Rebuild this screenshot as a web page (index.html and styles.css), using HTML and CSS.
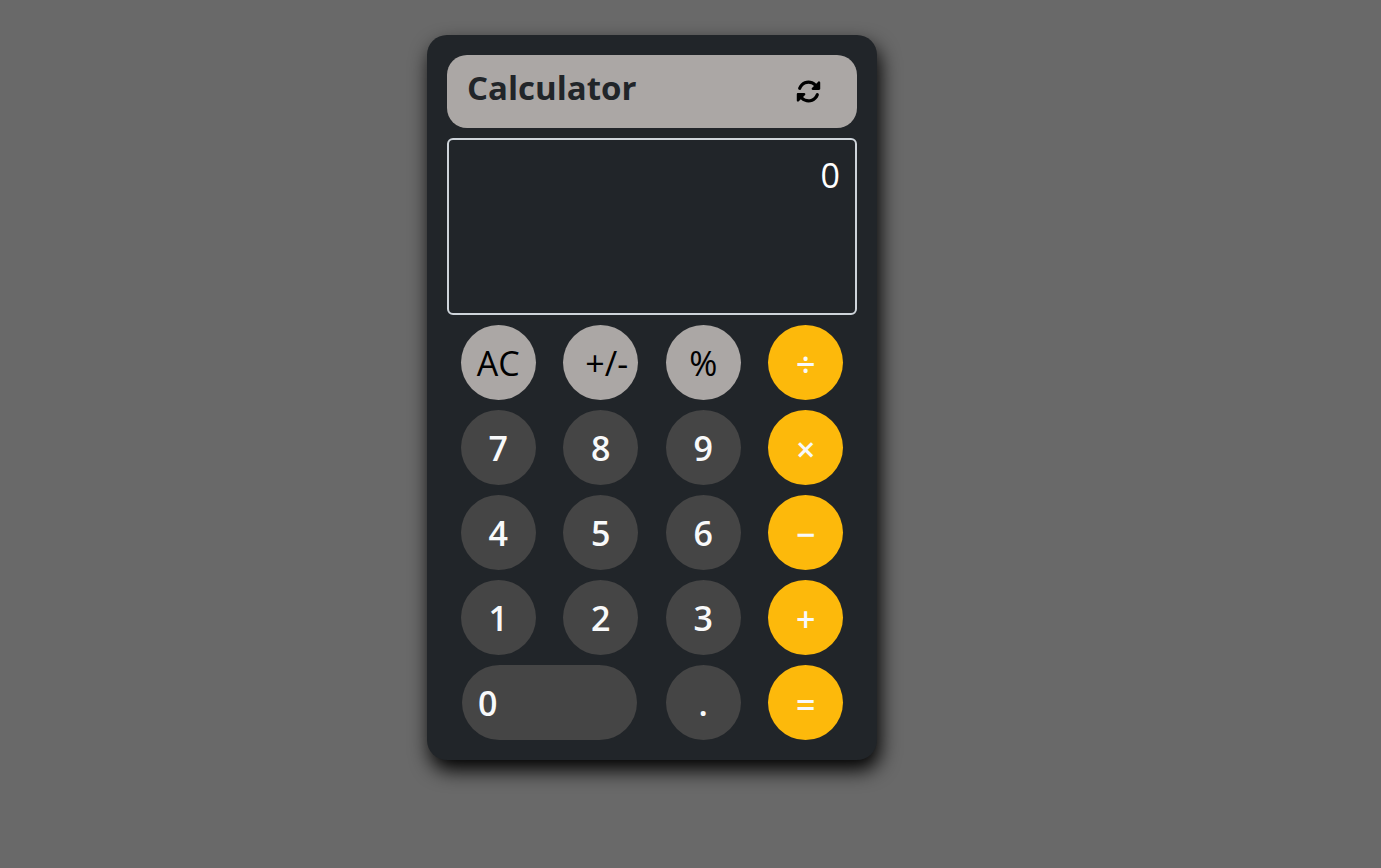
FILE: index.html
```html
<!DOCTYPE html>
<html lang="en">
<head>
<meta charset="utf-8">
<meta name="viewport" content="width=device-width, initial-scale=1">
<title>Calculator</title>
<link rel="stylesheet" href="styles.css">
</head>
<body>
<main class="calculator">
  <header class="header">
    <h1 class="title">Calculator</h1>
    <button class="refresh" type="button" aria-label="Refresh">
      <svg class="refresh-icon" viewBox="0 0 512 512" aria-hidden="true"><path d="M142.900 142.900c62.200-62.200 162.700-62.500 225.300-1L327 183c-6.900 6.900-8.900 17.200-5.200 26.200s12.500 14.800 22.200 14.800H472c13.300 0 24-10.700 24-24V72c0-9.700-5.800-18.500-14.800-22.200s-19.300-1.700-26.200 5.200L413.400 96.600c-87.600-86.500-228.700-86.200-315.800 1C73.200 122 55.600 150.700 44.800 181.400c-5.900 16.700 2.900 34.900 19.500 40.800s34.900-2.900 40.800-19.500c7.700-21.800 20.200-42.300 37.800-59.800zM16 312V440c0 9.700 5.800 18.500 14.800 22.200s19.300 1.700 26.200-5.200l41.600-41.600c87.600 86.500 228.700 86.200 315.800-1c24.400-24.400 42.100-53.100 52.900-83.700c5.900-16.700-2.900-34.900-19.500-40.800s-34.900 2.900-40.800 19.500c-7.700 21.800-20.200 42.300-37.800 59.800c-62.200 62.200-162.700 62.500-225.300 1L185 329c6.900-6.900 8.900-17.200 5.200-26.200s-12.500-14.800-22.200-14.800H40c-13.300 0-24 10.700-24 24z"/></svg>
    </button>
  </header>
  <output class="display" aria-label="Result">0</output>
  <section class="keys" aria-label="Keypad">
    <button class="key key-light" type="button">AC</button>
    <button class="key key-light key-sign" type="button">+/-</button>
    <button class="key key-light key-percent" type="button">%</button>
    <button class="key key-operator" type="button">÷</button>
    <button class="key" type="button">7</button>
    <button class="key" type="button">8</button>
    <button class="key" type="button">9</button>
    <button class="key key-operator" type="button">×</button>
    <button class="key" type="button">4</button>
    <button class="key" type="button">5</button>
    <button class="key" type="button">6</button>
    <button class="key key-operator" type="button">−</button>
    <button class="key" type="button">1</button>
    <button class="key" type="button">2</button>
    <button class="key" type="button">3</button>
    <button class="key key-operator" type="button">+</button>
    <button class="key key-zero" type="button">0</button>
    <button class="key" type="button">.</button>
    <button class="key key-operator" type="button">=</button>
  </section>
</main>
</body>
</html>
```

FILE: styles.css
```css
* {
  box-sizing: border-box;
}

body {
  display: flex;
  justify-content: center;
  align-items: flex-start;
  min-height: 100vh;
  margin: 0;
  padding: 35px 77px 35px 0;
  background: #696969;
  font-family: "Segoe UI", "Open Sans", "Noto Sans", sans-serif;
}

.calculator {
  display: flex;
  flex-direction: column;
  gap: 10px;
  width: 100%;
  max-width: 450px;
  padding: 20px;
  border-radius: 20px;
  background: #212529;
  box-shadow: 3px 10px 20px #000;
}

.header {
  display: flex;
  justify-content: space-between;
  align-items: center;
  min-height: 73px;
  padding: 0 36px 0 20px;
  border-radius: 20px;
  background: #aba7a5;
}

.title {
  margin: 0;
  padding-bottom: 8px;
  color: #212529;
  font-size: 33px;
  font-weight: 700;
  line-height: 42px;
}

.refresh {
  display: flex;
  padding: 0;
  border: 0;
  background: none;
  color: #000;
}

.refresh-icon {
  width: 25px;
  height: 25px;
  fill: currentColor;
}

.display {
  min-height: 177px;
  padding: 9px 15px;
  border: 2px solid #ced4da;
  border-radius: 6px;
  color: #fff;
  font-size: 34px;
  line-height: 52px;
  text-align: right;
}

.keys {
  display: grid;
  grid-template-columns: repeat(4, 1fr);
  gap: 10px 0;
  justify-items: center;
}

.key {
  width: 75px;
  height: 75px;
  padding: 1px 0 0;
  border: 0;
  border-radius: 38px;
  background: #454545;
  color: #f8f9fa;
  font-family: inherit;
  font-size: 34px;
  font-weight: 600;
  line-height: 52px;
  white-space: nowrap;
}

.key-light {
  background: #aba7a5;
  color: #000;
  font-weight: 500;
}

.key-sign {
  padding-left: 12px;
}

.key-percent {
  font-weight: 400;
}

.key-operator {
  padding-top: 3px;
  background: #fdb90b;
}

.key-zero {
  grid-column: span 2;
  width: 175px;
  padding-left: 16px;
  text-align: left;
}
```
